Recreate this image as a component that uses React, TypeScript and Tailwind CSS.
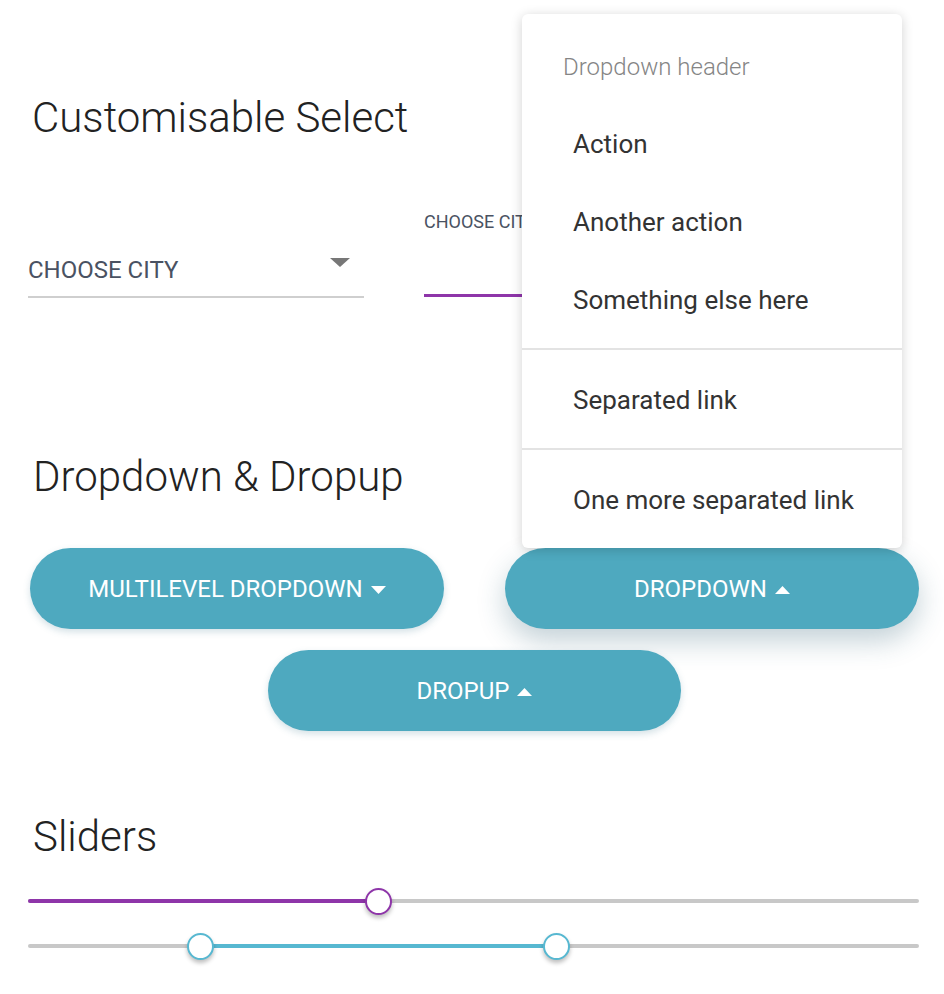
import React from 'react';

const purple = 'bg-[#8e35a9]';

function Caret({ up = false, className = '' }: { up?: boolean; className?: string }) {
  return (
    <svg width="15" height="8" viewBox="0 0 15 8" className={className}>
      {up ? <polygon points="0,8 15,8 7.5,0" fill="currentColor" /> : <polygon points="0,0 15,0 7.5,8" fill="currentColor" />}
    </svg>
  );
}

function PillButton({ label, up, active }: { label: string; up?: boolean; active?: boolean }) {
  return (
    <button
      className={
        'h-[81px] w-full rounded-full bg-[#4ea9bf] text-white text-[24px] flex items-center justify-center gap-[8px] ' +
        (active
          ? 'shadow-[0_12px_28px_rgba(40,90,110,0.28)]'
          : 'shadow-[0_3px_7px_rgba(60,120,140,0.22)]')
      }
    >
      <span className="leading-[30px]">{label}</span>
      <Caret up={up} className="mt-[2px]" />
    </button>
  );
}

function Slider({ from, to, color }: { from: number; to: number; color: 'purple' | 'teal' }) {
  const fill = color === 'purple' ? 'bg-[#8e35a9]' : 'bg-[#57b8d1]';
  const ring = color === 'purple' ? 'border-[#8e35a9]' : 'border-[#57b8d1]';
  const thumbs = color === 'purple' ? [to] : [from, to];
  return (
    <div className="relative h-[28px] flex items-center">
      <div className="h-[4px] w-full rounded-full bg-[#c8c8c8]" />
      <div className={'absolute h-[4px] top-[12px] rounded-full ' + fill} style={{ left: from, width: to - from }} />
      {thumbs.map((x) => (
        <div
          key={x}
          className={'absolute top-[0.5px] w-[27px] h-[27px] rounded-full bg-white border-2 shadow-[0_3px_4px_rgba(0,0,0,0.25)] ' + ring}
          style={{ left: x - 13.5 }}
        />
      ))}
    </div>
  );
}

export default function App() {
  const items = ['Action', 'Another action', 'Something else here'];

  return (
    <div className="relative w-[944px] h-[994px] overflow-hidden bg-white font-['Roboto',sans-serif]">
      <div className="pl-[28px] pr-[25px] pt-[93px]">
        <h1 className="pl-[4px] text-[42px] leading-[50px] font-light text-[#222]">Customisable Select</h1>

        <div className="mt-[68px] grid grid-cols-[336px_336px] gap-[60px] items-end">
          <div className="relative border-b-2 border-[#cfcfcf] pb-[11px] text-[#4a5262]">
            <div className="text-[24px] leading-[30px]">CHOOSE CITY</div>
            <svg width="20" height="9" viewBox="0 0 20 9" className="absolute right-[14px] top-[3px]">
              <polygon points="0,0 20,0 10,9" fill="#777" />
            </svg>
          </div>
          <div className="mb-[1px] h-[86px] flex flex-col">
            <div className="text-[18px] leading-[22px] text-[#4a5262]">CHOOSE CITY</div>
            <div className="flex-1" />
            <div className={'h-[3px] ' + purple} />
          </div>
        </div>

        <h2 className="mt-[154px] pl-[5px] text-[42px] leading-[50px] font-light text-[#222]">Dropdown &amp; Dropup</h2>

        <div className="mt-[46px] pl-[2px] grid grid-cols-2 gap-[61px]">
          <PillButton label="MULTILEVEL DROPDOWN" />
          <PillButton label="DROPDOWN" up active />
        </div>
        <div className="mt-[21px] flex justify-center pl-[2px]">
          <div className="w-[413px]">
            <PillButton label="DROPUP" up />
          </div>
        </div>

        <h2 className="mt-[81px] pl-[5px] text-[42px] leading-[50px] font-light text-[#222]">Sliders</h2>

        <div className="mt-[25px] flex flex-col gap-[17px]">
          <Slider from={0} to={350} color="purple" />
          <Slider from={172} to={528} color="teal" />
        </div>
      </div>

      {/* open dropdown menu */}
      <div className="absolute left-[522px] top-[14px] w-[380px] rounded-[6px] bg-white py-[10px] shadow-[0_2px_12px_rgba(0,0,0,0.18)]">
        <div className="h-[80px] pt-[5px] flex items-center pl-[41px] text-[24px] font-light text-[#858585]">Dropdown header</div>
        {items.map((t) => (
          <div key={t} className="h-[78px] pt-[2px] flex items-center pl-[51px] text-[26px] text-[#333]">
            {t}
          </div>
        ))}
        <div className="my-[10px] h-[2px] bg-[#e3e3e3]" />
        <div className="h-[78px] pt-[2px] flex items-center pl-[51px] text-[26px] text-[#333]">Separated link</div>
        <div className="my-[10px] h-[2px] bg-[#e3e3e3]" />
        <div className="h-[78px] pt-[2px] flex items-center pl-[51px] text-[26px] text-[#333]">One more separated link</div>
      </div>
    </div>
  );
}
